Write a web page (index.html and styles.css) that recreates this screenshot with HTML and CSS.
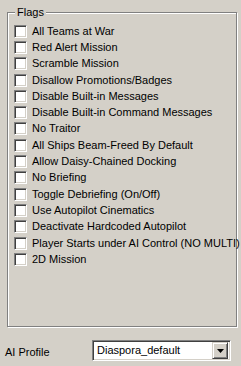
FILE: index.html
```html
<!DOCTYPE html>
<html>
<head>
<meta charset="utf-8">
<link rel="stylesheet" href="styles.css">
</head>
<body>
<div class="page">
  <div class="group">
    <span class="legend">Flags</span>
    <div class="list">
      <label class="row"><span class="cb"></span><span>All Teams at War</span></label>
      <label class="row"><span class="cb"></span><span>Red Alert Mission</span></label>
      <label class="row"><span class="cb"></span><span>Scramble Mission</span></label>
      <label class="row"><span class="cb"></span><span>Disallow Promotions/Badges</span></label>
      <label class="row"><span class="cb"></span><span>Disable Built-in Messages</span></label>
      <label class="row"><span class="cb"></span><span>Disable Built-in Command Messages</span></label>
      <label class="row"><span class="cb"></span><span>No Traitor</span></label>
      <label class="row"><span class="cb"></span><span>All Ships Beam-Freed By Default</span></label>
      <label class="row"><span class="cb"></span><span>Allow Daisy-Chained Docking</span></label>
      <label class="row"><span class="cb"></span><span>No Briefing</span></label>
      <label class="row"><span class="cb"></span><span>Toggle Debriefing (On/Off)</span></label>
      <label class="row"><span class="cb"></span><span>Use Autopilot Cinematics</span></label>
      <label class="row"><span class="cb"></span><span>Deactivate Hardcoded Autopilot</span></label>
      <label class="row"><span class="cb"></span><span>Player Starts under AI Control (NO MULTI)</span></label>
      <label class="row"><span class="cb"></span><span>2D Mission</span></label>
    </div>
  </div>
  <div class="profile">
    <span class="plabel">AI Profile</span>
    <div class="combo">
      <span class="ctext">Diaspora_default</span>
      <span class="cbtn"><svg width="7" height="4" viewBox="0 0 7 4"><path d="M0 0H7L3.5 4Z" fill="#000"/></svg></span>
    </div>
  </div>
</div>
</body>
</html>
```
FILE: styles.css
```css
html, body {
  margin: 0;
  padding: 0;
  background: #d4d0c8;
}
body {
  font-family: "Liberation Sans", Arial, sans-serif;
  font-size: 11px;
  color: #000;
  width: 241px;
  height: 366px;
  overflow: hidden;
}
.page {
  display: flex;
  flex-direction: column;
  padding: 12px 0 0 7px;
}
.group {
  position: relative;
  width: 228px;
  height: 313px;
  border: 1px solid #808080;
  box-shadow: 1px 1px 0 #fff, inset 1px 1px 0 #fff;
}
.legend {
  position: absolute;
  top: -8px;
  left: 7px;
  padding: 0 2px 0 2px;
  background: #d4d0c8;
  line-height: 14px;
}
.list {
  display: flex;
  flex-direction: column;
  padding: 10px 0 0 6px;
}
.row {
  display: flex;
  align-items: center;
  height: 16.3px;
  gap: 5px;
  white-space: nowrap;
}
.row > span:last-child {
  line-height: 13px;
}
.cb {
  box-sizing: border-box;
  width: 13px;
  height: 13px;
  flex: none;
  background: #fff;
  border-top: 1px solid #808080;
  border-left: 1px solid #808080;
  border-right: 1px solid #fff;
  border-bottom: 1px solid #fff;
  box-shadow: inset 1px 1px 0 #404040, inset -1px -1px 0 #d4d0c8;
}
.profile {
  display: flex;
  align-items: center;
  margin-top: 13px;
  margin-left: -2px;
}
.plabel {
  width: 87px;
  padding-top: 3px;
}
.combo {
  box-sizing: border-box;
  width: 139px;
  height: 21px;
  display: flex;
  align-items: center;
  background: #fff;
  border-top: 1px solid #808080;
  border-left: 1px solid #808080;
  border-right: 1px solid #fff;
  border-bottom: 1px solid #fff;
  box-shadow: inset 1px 1px 0 #404040, inset -1px -1px 0 #d4d0c8;
  padding: 2px 2px 2px 4px;
}
.ctext {
  flex: 1;
  line-height: 13px;
}
.cbtn {
  box-sizing: border-box;
  width: 16px;
  height: 17px;
  display: flex;
  align-items: center;
  justify-content: center;
  background: #d4d0c8;
  border-top: 1px solid #d4d0c8;
  border-left: 1px solid #d4d0c8;
  border-right: 1px solid #404040;
  border-bottom: 1px solid #404040;
  box-shadow: inset 1px 1px 0 #fff, inset -1px -1px 0 #808080;
}
```
